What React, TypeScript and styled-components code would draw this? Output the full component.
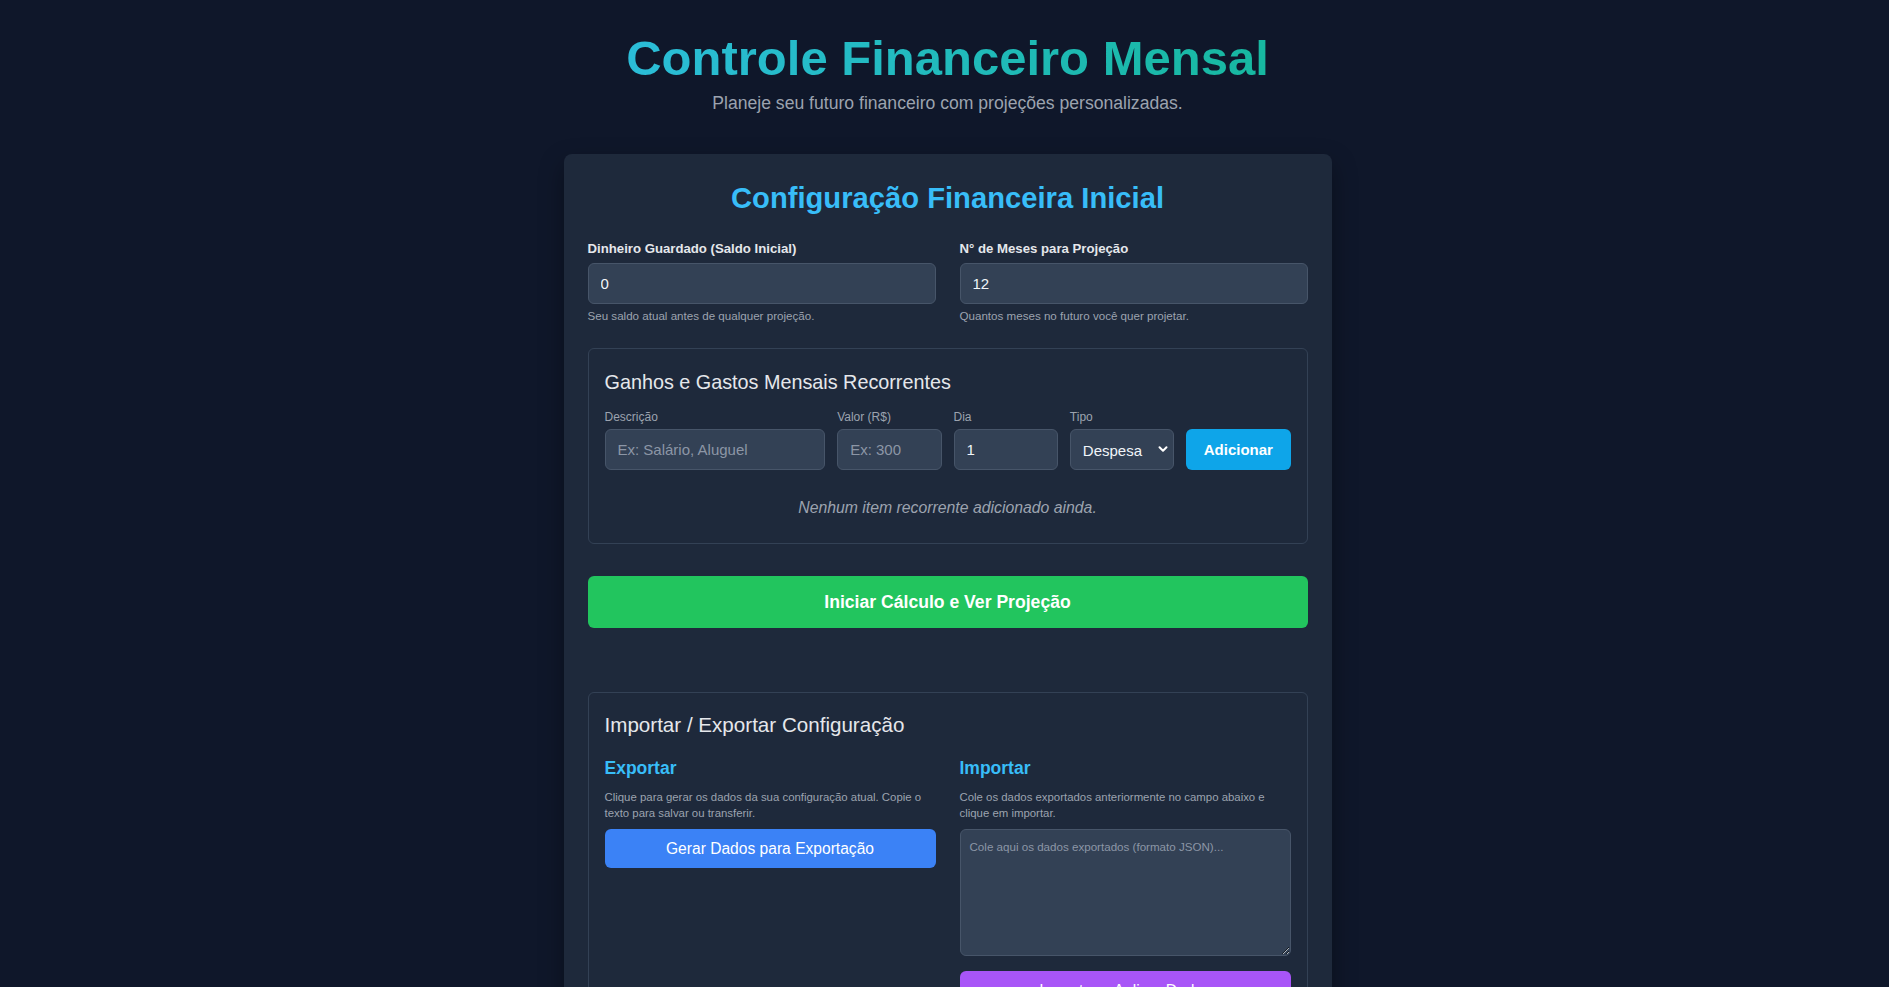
import React, { useState } from 'react';
import styled, { createGlobalStyle } from 'styled-components';

const GlobalStyle = createGlobalStyle`
  html, body {
    margin: 0;
    background: #0f172a;
  }
  body {
    font-family: "Liberation Sans", Arial, sans-serif;
    color: #e2e8f0;
  }
  * {
    box-sizing: border-box;
  }
`;

const Page = styled.div`
  display: flex;
  flex-direction: column;
  align-items: center;
  padding: 31px 10px 40px 16px;
  min-height: 987px;
`;

const Header = styled.header`
  display: flex;
  flex-direction: column;
  align-items: center;
  margin-bottom: 37px;
`;

const Title = styled.h1`
  margin: 0;
  font-size: 49px;
  line-height: 54px;
  font-weight: 800;
  background: linear-gradient(to right, #2bbdd8, #17b8a0);
  -webkit-background-clip: text;
  background-clip: text;
  color: transparent;
`;

const Subtitle = styled.p`
  margin: 4px 0 0;
  font-size: 17.6px;
  line-height: 28px;
  font-weight: 300;
  color: #9ca3af;
`;

const Card = styled.main`
  width: 768px;
  background: #1e293b;
  border-radius: 8px;
  padding: 24px;
  box-shadow: 0 10px 25px rgba(0, 0, 0, 0.35);
`;

const CardTitle = styled.h2`
  margin: 1px 0 22px;
  text-align: center;
  font-size: 29.2px;
  line-height: 38px;
  font-weight: 700;
  color: #38bdf8;
`;

const FieldGrid = styled.div`
  display: grid;
  grid-template-columns: 1fr 1fr;
  gap: 24px;
`;

const Field = styled.div`
  display: flex;
  flex-direction: column;
`;

const Label = styled.label`
  font-size: 13.2px;
  line-height: 20px;
  font-weight: 700;
  color: #e5e7eb;
  margin-bottom: 4px;
`;

const SmallLabel = styled.label`
  font-size: 12px;
  line-height: 16px;
  color: #9ca3af;
  margin-bottom: 4px;
`;

const Input = styled.input`
  width: 100%;
  height: 41px;
  padding: 0 12px;
  background: #334155;
  border: 1px solid #475569;
  border-radius: 6px;
  color: #f1f5f9;
  font-family: inherit;
  font-size: 15px;
  outline: none;

  &::placeholder {
    color: #8c96a6;
  }
`;

const Hint = styled.p`
  margin: 4px 0 0;
  font-size: 11.6px;
  line-height: 16px;
  color: #9ca3af;
`;

const Section = styled.section<{ $gap?: number }>`
  margin-top: ${(p) => p.$gap ?? 24}px;
  border: 1px solid #334155;
  border-radius: 6px;
  padding: 16px;
`;

const SectionTitle = styled.h3<{ $size?: number; $top?: number; $bottom?: number }>`
  margin: ${(p) => p.$top ?? 2}px 0 ${(p) => p.$bottom ?? 12}px;
  font-size: ${(p) => p.$size ?? 20}px;
  line-height: 30px;
  font-weight: 400;
  color: #e5e7eb;
`;

const RecurringGrid = styled.div`
  display: grid;
  grid-template-columns: repeat(6, 1fr);
  gap: 12px;
  align-items: end;
`;

const Cell = styled.div<{ $span?: number }>`
  display: flex;
  flex-direction: column;
  grid-column: span ${(p) => p.$span ?? 1};
`;

const SelectWrap = styled.div`
  position: relative;
`;

const Select = styled.select`
  width: 100%;
  height: 41px;
  padding: 2px 24px 0 12px;
  appearance: none;
  -webkit-appearance: none;
  background: #334155;
  border: 1px solid #475569;
  border-radius: 6px;
  color: #f1f5f9;
  font-family: inherit;
  font-size: 15px;
  outline: none;
`;

const Chevron = styled.svg`
  position: absolute;
  right: 5px;
  top: 14px;
  pointer-events: none;
`;

const Button = styled.button<{ $tone: 'sky' | 'green' | 'blue' | 'purple' }>`
  width: 100%;
  border: none;
  border-radius: 6px;
  color: #ffffff;
  font-family: inherit;
  font-weight: 700;
  cursor: pointer;
  background: ${(p) =>
    ({ sky: '#0ea5e9', green: '#22c55e', blue: '#3b82f6', purple: '#a855f7' })[p.$tone]};
`;

const AddButton = styled(Button)`
  height: 41px;
  font-size: 15px;
`;

const MainButton = styled(Button)`
  margin-top: 32px;
  height: 52px;
  font-size: 17.6px;
`;

const ColButton = styled(Button)`
  height: 39px;
  font-size: 15.6px;
  font-weight: 400;
`;

const EmptyNote = styled.p`
  margin: 20px 0 0;
  padding: 8px 0 9px;
  text-align: center;
  font-size: 15.8px;
  line-height: 20px;
  font-style: italic;
  color: #9ca3af;
`;

const Columns = styled.div`
  display: grid;
  grid-template-columns: 1fr 1fr;
  gap: 24px;
`;

const Column = styled.div`
  display: flex;
  flex-direction: column;
`;

const ColTitle = styled.h4`
  margin: 0 0 7px;
  font-size: 17.5px;
  line-height: 28px;
  font-weight: 700;
  color: #38bdf8;
`;

const ColText = styled.p`
  margin: 0 0 8px;
  font-size: 11.4px;
  line-height: 16px;
  color: #9ca3af;
`;

const TextArea = styled.textarea`
  width: 100%;
  height: 127px;
  padding: 8px 9px;
  background: #334155;
  border: 1px solid #475569;
  border-radius: 6px;
  color: #f1f5f9;
  font-family: inherit;
  font-size: 11.6px;
  line-height: 18px;
  outline: none;

  &::placeholder {
    color: #8c96a6;
  }
`;

const ImportButton = styled(ColButton)`
  margin-top: 15px;
`;

function App() {
  const [saldo, setSaldo] = useState('0');
  const [meses, setMeses] = useState('12');
  const [dia, setDia] = useState('1');
  const [tipo, setTipo] = useState('despesa');

  return (
    <>
      <GlobalStyle />
      <Page>
        <Header>
          <Title>Controle Financeiro Mensal</Title>
          <Subtitle>Planeje seu futuro financeiro com projeções personalizadas.</Subtitle>
        </Header>

        <Card>
          <CardTitle>Configuração Financeira Inicial</CardTitle>

          <FieldGrid>
            <Field>
              <Label>Dinheiro Guardado (Saldo Inicial)</Label>
              <Input type="number" value={saldo} onChange={(e) => setSaldo(e.target.value)} />
              <Hint>Seu saldo atual antes de qualquer projeção.</Hint>
            </Field>
            <Field>
              <Label>N° de Meses para Projeção</Label>
              <Input type="number" value={meses} onChange={(e) => setMeses(e.target.value)} />
              <Hint>Quantos meses no futuro você quer projetar.</Hint>
            </Field>
          </FieldGrid>

          <Section>
            <SectionTitle $size={19.8}>Ganhos e Gastos Mensais Recorrentes</SectionTitle>
            <RecurringGrid>
              <Cell $span={2}>
                <SmallLabel>Descrição</SmallLabel>
                <Input placeholder="Ex: Salário, Aluguel" />
              </Cell>
              <Cell>
                <SmallLabel>Valor (R$)</SmallLabel>
                <Input placeholder="Ex: 300" />
              </Cell>
              <Cell>
                <SmallLabel>Dia</SmallLabel>
                <Input type="number" value={dia} onChange={(e) => setDia(e.target.value)} />
              </Cell>
              <Cell>
                <SmallLabel>Tipo</SmallLabel>
                <SelectWrap>
                  <Select value={tipo} onChange={(e) => setTipo(e.target.value)}>
                    <option value="despesa">Despesa</option>
                    <option value="ganho">Ganho</option>
                  </Select>
                  <Chevron width="12" height="12" viewBox="0 0 12 12">
                    <path d="M2.5 4.2 6 7.7 9.5 4.2" fill="none" stroke="#ffffff" strokeWidth="2" strokeLinecap="round" strokeLinejoin="round" />
                  </Chevron>
                </SelectWrap>
              </Cell>
              <Cell>
                <AddButton $tone="sky">Adicionar</AddButton>
              </Cell>
            </RecurringGrid>
            <EmptyNote>Nenhum item recorrente adicionado ainda.</EmptyNote>
          </Section>

          <MainButton $tone="green">Iniciar Cálculo e Ver Projeção</MainButton>

          <Section $gap={64}>
            <SectionTitle $size={20.6} $top={1} $bottom={14}>
              Importar / Exportar Configuração
            </SectionTitle>
            <Columns>
              <Column>
                <ColTitle>Exportar</ColTitle>
                <ColText>
                  Clique para gerar os dados da sua configuração atual. Copie o texto para salvar ou transferir.
                </ColText>
                <ColButton $tone="blue">Gerar Dados para Exportação</ColButton>
              </Column>
              <Column>
                <ColTitle>Importar</ColTitle>
                <ColText>Cole os dados exportados anteriormente no campo abaixo e clique em importar.</ColText>
                <TextArea placeholder="Cole aqui os dados exportados (formato JSON)..." />
                <ImportButton $tone="purple">Importar e Aplicar Dados</ImportButton>
              </Column>
            </Columns>
          </Section>
        </Card>
      </Page>
    </>
  );
}

export default App;
